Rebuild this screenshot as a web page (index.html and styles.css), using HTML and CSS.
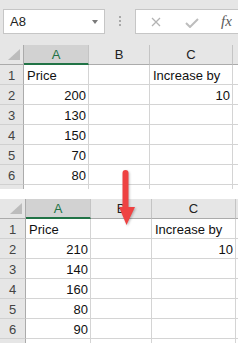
FILE: index.html
```html
<!DOCTYPE html>
<html lang="en">
<head>
    <meta charset="UTF-8">
    <title>Increase by</title>
    <link rel="stylesheet" href="styles.css">
</head>
<body>

<div class="app">
    <!-- name box + formula bar -->
    <div class="toolbar">
        <div class="namebox">
            <span>A8</span>
            <span class="caret"></span>
        </div>
        <div class="grip"><i></i><i></i><i></i></div>
        <div class="formula">
            <svg class="icon-x" width="10" height="10" viewBox="0 0 10 10">
                <path d="M1 1 L9 9 M9 1 L1 9" stroke="#b3b3b3" stroke-width="1.3" fill="none"/>
            </svg>
            <svg class="icon-ok" width="14" height="10" viewBox="0 0 14 10">
                <path d="M1 5 L5 9 L13 1" stroke="#bdbdbd" stroke-width="2" fill="none"/>
            </svg>
            <span class="fx">fx</span>
        </div>
    </div>

    <!-- before -->
    <div class="sheet before">
        <div class="hd corner">
            <svg width="24" height="19" viewBox="0 0 24 19"><polygon points="20,4 20,15 8,15" fill="#bcbcbc"/></svg>
        </div>
        <div class="hd sel">A</div>
        <div class="hd">B</div>
        <div class="hd">C</div>
        <div class="hd"></div>

        <div class="rn">1</div><div class="c">Price</div><div class="c"></div><div class="c">Increase by</div><div class="c"></div>
        <div class="rn">2</div><div class="c num">200</div><div class="c"></div><div class="c num">10</div><div class="c"></div>
        <div class="rn">3</div><div class="c num">130</div><div class="c"></div><div class="c"></div><div class="c"></div>
        <div class="rn">4</div><div class="c num">150</div><div class="c"></div><div class="c"></div><div class="c"></div>
        <div class="rn">5</div><div class="c num">70</div><div class="c"></div><div class="c"></div><div class="c"></div>
        <div class="rn">6</div><div class="c num">80</div><div class="c"></div><div class="c"></div><div class="c"></div>
        <div class="rn"></div><div class="c"></div><div class="c"></div><div class="c"></div><div class="c"></div>
    </div>

    <div class="gap"></div>

    <!-- after -->
    <div class="sheet after">
        <div class="hd corner">
            <svg width="26" height="19" viewBox="0 0 26 19"><polygon points="22,4 22,15 10,15" fill="#bcbcbc"/></svg>
        </div>
        <div class="hd sel">A</div>
        <div class="hd">B</div>
        <div class="hd">C</div>
        <div class="hd"></div>

        <div class="rn">1</div><div class="c">Price</div><div class="c"></div><div class="c">Increase by</div><div class="c"></div>
        <div class="rn">2</div><div class="c num">210</div><div class="c"></div><div class="c num">10</div><div class="c"></div>
        <div class="rn">3</div><div class="c num">140</div><div class="c"></div><div class="c"></div><div class="c"></div>
        <div class="rn">4</div><div class="c num">160</div><div class="c"></div><div class="c"></div><div class="c"></div>
        <div class="rn">5</div><div class="c num">80</div><div class="c"></div><div class="c"></div><div class="c"></div>
        <div class="rn">6</div><div class="c num">90</div><div class="c"></div><div class="c"></div><div class="c"></div>
        <div class="rn"></div><div class="c"></div><div class="c"></div><div class="c"></div><div class="c"></div>
    </div>

    <!-- red arrow drawn over both screenshots -->
    <svg class="arrow" width="238" height="343" viewBox="0 0 238 343">
        <line x1="125.5" y1="173" x2="125.5" y2="209" stroke="#ee4242" stroke-width="6" stroke-linecap="round"/>
        <polygon points="119,207 135,207 126.5,225" fill="#ee4242"/>
    </svg>
</div>

</body>
</html>
```

FILE: styles.css
```css
body {
    margin: 0;
    padding: 0;
    background: #ffffff;
    font-family: "Liberation Sans", Arial, sans-serif;
}
.app {
    position: relative;
    width: 238px;
    height: 343px;
    overflow: hidden;
}
.toolbar {
    height: 45px;
    background: #e6e6e6;
    display: flex;
    align-items: flex-start;
    padding-top: 9px;
    box-sizing: border-box;
}
.namebox {
    margin-left: 3px;
    width: 102px;
    height: 25px;
    box-sizing: border-box;
    background: #fff;
    border: 1px solid #c6c6c6;
    display: flex;
    align-items: center;
    justify-content: space-between;
    padding: 0 6px 0 6px;
    font-size: 13px;
    color: #222;
}
.caret {
    width: 0;
    height: 0;
    border-left: 3.5px solid transparent;
    border-right: 3.5px solid transparent;
    border-top: 4px solid #7a7a7a;
}
.grip {
    width: 30px;
    display: flex;
    flex-direction: column;
    align-items: center;
    gap: 2px;
    padding-top: 7px;
}
.grip i {
    display: block;
    width: 2px;
    height: 2px;
    background: #a8a8a8;
}
.formula {
    flex: 1;
    height: 25px;
    box-sizing: border-box;
    background: #fff;
    border: 1px solid #c6c6c6;
    border-right: none;
    display: flex;
    align-items: center;
}
.icon-x {
    margin-left: 15px;
    margin-top: 1px;
}
.icon-ok {
    margin-left: 24px;
    margin-top: 2px;
}
.fx {
    margin-left: 22px;
    font-family: "Liberation Serif", serif;
    font-style: italic;
    font-size: 15px;
    color: #5a5a5a;
}

.sheet {
    display: grid;
    grid-auto-rows: 20px;
    overflow: hidden;
    font-size: 13px;
    color: #111;
}
.before {
    grid-template-columns: 24px 65px 61px 83px 1fr;
    height: 144px;
}
.after {
    grid-template-columns: 26px 65px 61px 84px 1fr;
    height: 144px;
}
.gap {
    height: 10px;
}
.sheet > div {
    box-sizing: border-box;
    border-right: 1px solid #d4d4d4;
    border-bottom: 1px solid #d4d4d4;
    padding: 2px 3px 0 3px;
    line-height: 17px;
    white-space: nowrap;
}
.sheet .hd {
    background: #e6e6e6;
    border-right-color: #c4c4c4;
    border-bottom-color: #ababab;
    text-align: center;
    color: #222;
    padding: 1px 0 0 0;
}
.sheet .hd.sel {
    background: #d2d2d2;
    color: #217346;
    border-bottom: 2px solid #217346;
}
.sheet .corner {
    padding: 0;
    border-right-color: #ababab;
}
.corner svg {
    display: block;
}
.sheet .rn {
    background: #e6e6e6;
    border-right-color: #ababab;
    border-bottom-color: #d0d0d0;
    text-align: center;
    color: #444;
    padding: 2px 0 0 0;
}
.sheet .num {
    text-align: right;
    padding-right: 2px;
}
.arrow {
    position: absolute;
    left: 0;
    top: 0;
    pointer-events: none;
    filter: drop-shadow(1px 1px 1px rgba(0, 0, 0, 0.25));
}
```
